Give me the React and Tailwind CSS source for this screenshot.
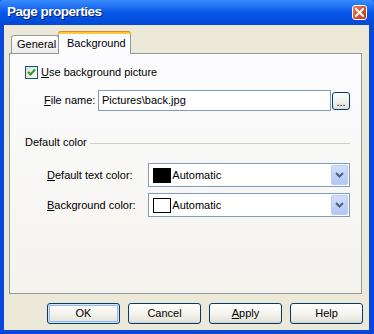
import React from 'react';

const XpButton = ({ children, isDefault }) => (
  <button
    className={`w-[73px] h-[21px] rounded-[3px] border border-[#003C74] bg-gradient-to-b from-[#FFFFFF] via-[#F5F4EF] to-[#E3E1D6] text-[11px] text-black leading-none ${
      isDefault ? 'shadow-[inset_0_0_0_1px_#CEE7FF,inset_0_0_0_2px_#98B8EA]' : 'shadow-[inset_0_-1px_0_#D6D0C5]'
    }`}
  >
    {children}
  </button>
);

const ColorSelect = ({ swatch }) => (
  <div className="w-[203px] h-[24px] border border-[#7F9DB9] bg-white flex items-center pl-[4px] pr-[1px]">
    <div className={`w-[18px] h-[15px] border border-black ${swatch}`}></div>
    <span className="ml-[1px] text-[11px]">Automatic</span>
    <div className="ml-auto w-[17px] h-[20px] rounded-[2px] border border-[#B9CBF3] bg-gradient-to-b from-[#D2DEFB] to-[#B3C7F5] flex items-center justify-center">
      <svg width="9" height="6" viewBox="0 0 9 6">
        <path d="M1 1 L4.5 4.5 L8 1" stroke="#4D6185" strokeWidth="2" fill="none" />
      </svg>
    </div>
  </div>
);

export default function App() {
  return (
    <div className="w-[374px] h-[334px] flex flex-col bg-[#0A48DC] font-['Liberation_Sans',Arial,sans-serif] text-black select-none">
      {/* title bar */}
      <div className="h-[25px] shrink-0 flex items-center pl-[7px] pr-[7px] rounded-t-[2px] bg-gradient-to-b from-[#3A8CFF] via-[#0758E8] to-[#0148D6]">
        <span className="text-white font-bold text-[13.5px] tracking-[-0.5px] [text-shadow:1px_1px_0_#0A1E6E]">Page properties</span>
        <div className="ml-auto w-[15px] h-[15px] rounded-[3px] border border-white bg-gradient-to-br from-[#E8876B] via-[#D9512F] to-[#C03A1C] flex items-center justify-center">
          <svg width="9" height="9" viewBox="0 0 9 9">
            <path d="M1 1 L8 8 M8 1 L1 8" stroke="white" strokeWidth="2" strokeLinecap="square" />
          </svg>
        </div>
      </div>

      {/* dialog body */}
      <div className="flex-1 ml-[4px] mr-[5px] mb-[4px] bg-[#ECE9D8] flex flex-col pl-[5px] pr-[7px] pt-[6px]">
        {/* tabs */}
        <div className="flex items-end pl-[2px] h-[22px] relative z-10">
          <div className="w-[48px] h-[18px] border border-b-0 border-[#919B9C] rounded-t-[3px] bg-gradient-to-b from-white to-[#ECEBE6] text-[11px] flex items-center pl-[5px]">
            General
          </div>
          <div className="w-[73px] h-[23px] -ml-[1px] -mb-[1px] border border-b-0 border-[#919B9C] border-t-0 rounded-t-[3px] bg-[#FCFCFE] flex flex-col">
            <div className="h-[3px] rounded-t-[3px] bg-[#FFC83C] border-t border-[#E68B2C] -mx-[1px]"></div>
            <div className="flex-1 text-[11px] flex items-center pl-[8px] pb-[2px]">Background</div>
          </div>
        </div>

        {/* panel */}
        <div className="h-[241px] border border-[#919B9C] bg-gradient-to-b from-[#FCFCFE] to-[#F4F3EE] flex flex-col pt-[12px] pl-[15px] pr-[11px]">
          <div className="flex items-center h-[13px]">
            <div className="w-[13px] h-[13px] border border-[#1C5180] bg-gradient-to-br from-[#DCDCD7] to-white flex items-center justify-center">
              <svg width="9" height="9" viewBox="0 0 9 9">
                <path d="M1 4 L3.5 6.5 L8 1.5" stroke="#21A121" strokeWidth="2" fill="none" />
              </svg>
            </div>
            <span className="ml-[3px] text-[11px]"><span className="underline">U</span>se background picture</span>
          </div>

          <div className="flex items-center mt-[11px] h-[21px] pl-[19px]">
            <span className="text-[11px] w-[54px]"><span className="underline">F</span>ile name:</span>
            <div className="w-[233px] h-[21px] border border-[#7F9DB9] bg-white flex items-center pl-[3px] text-[11px]">
              Pictures\back.jpg
            </div>
            <div className="ml-[1px] w-[18px] h-[18px] rounded-[3px] border border-[#003C74] bg-gradient-to-b from-white to-[#E3E1D6] flex items-end justify-center text-[11px] leading-[13px]">
              ...
            </div>
          </div>

          <div className="flex items-center mt-[24px] h-[14px]">
            <span className="text-[11px]">Default color</span>
            <div className="flex-1 ml-[3px] h-px bg-[#D0D0BF] mt-[2px]"></div>
          </div>

          <div className="flex items-center mt-[14px] pl-[22px]">
            <span className="text-[11px] w-[102px]"><span className="underline">D</span>efault text color:</span>
            <ColorSelect swatch="bg-black" />
          </div>
          <div className="flex items-center mt-[6px] pl-[22px]">
            <span className="text-[11px] w-[102px]"><span className="underline">B</span>ackground color:</span>
            <ColorSelect swatch="bg-white" />
          </div>
        </div>

        {/* buttons */}
        <div className="flex justify-end gap-[8px] mt-[9px] -mr-[1px]">
          <XpButton isDefault>OK</XpButton>
          <XpButton>Cancel</XpButton>
          <XpButton><span className="underline">A</span>pply</XpButton>
          <XpButton>Help</XpButton>
        </div>
      </div>
    </div>
  );
}
